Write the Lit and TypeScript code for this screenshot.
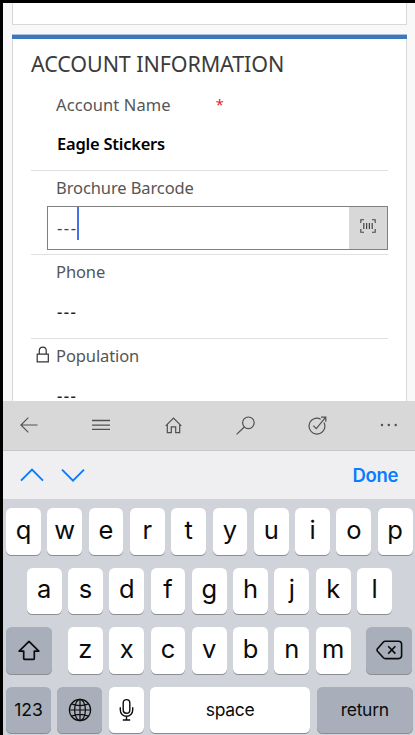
import { LitElement, html, css, svg } from "lit";
import { customElement } from "lit/decorators.js";

const icon = (w: number, h: number, body: unknown, sw = 1.2) => html`<svg
  width=${w} height=${h} viewBox="0 0 ${w} ${h}" fill="none" stroke="currentColor" stroke-width=${sw}>${body}</svg>`;

const icons = {
  lock: icon(14, 18, svg`<path d="M1.2 8.2H12.3V15.8H1.2ZM3.3 8V4.6C3.3 2.3 4.8 1.2 6.7 1.2S10.2 2.3 10.2 4.6V8"/>`),
  scan: icon(16, 14, svg`<path d="M4 .8H.8V4M12 .8H15.2V4M.8 10V13.2H4M15.2 10V13.2H12"/><path d="M3.8 4V10M6.6 4V10M9.4 4V10M12.2 4V10" stroke-width="1.2"/>`, 1.1),
  back: icon(18, 16, svg`<path d="M17.5 8H.8M8.3 .6L.9 8L8.3 15.4"/>`, 1.1),
  menu: icon(18, 12, svg`<path d="M0 1.5H18M0 6.2H18M0 10.4H18"/>`, 1.3),
  home: icon(17, 17, svg`<path d="M.7 8.9L8.5 1L16.3 8.9M2.3 7.6V15.6H6.3V9.9H10.7V15.6H14.7V7.6"/>`),
  search: icon(19, 19, svg`<circle cx="12.4" cy="6.8" r="5.8"/><path d="M8.3 11L.6 18.4"/>`),
  task: icon(19, 19, svg`<path d="M12.7 3.2A7.9 7.9 0 1 0 16 6.6M5.3 9.6L8.3 12.6L17.3 1.6M13 1.2H17.8V5.8"/>`),
  more: icon(18, 4, svg`<g fill="currentColor" stroke="none"><circle cx="2" cy="2" r="1.2"/><circle cx="8.8" cy="2" r="1.2"/><circle cx="15.7" cy="2" r="1.2"/></g>`),
  up: icon(24, 14, svg`<path d="M1 12.6L12 1.6L23 12.6"/>`, 2),
  down: icon(24, 14, svg`<path d="M1 1.6L12 12.6L23 1.6"/>`, 2),
  shift: icon(22, 21, svg`<path d="M11 1.3L20.8 11.2H16.3V18.6Q16.3 19.3 15.6 19.3H6.4Q5.7 19.3 5.7 18.6V11.2H1.2Z" stroke-linejoin="round"/>`, 1.7),
  erase: icon(27, 20, svg`<path d="M9.3 1.2H22.5Q25.6 1.2 25.6 4.2V15.6Q25.6 18.6 22.5 18.6H9.3Q8.2 18.6 7.4 17.8L1.5 11.2Q.6 9.9 1.5 8.7L7.4 2Q8.2 1.2 9.3 1.2Z"/><path d="M12.2 6.2L19.4 13.6M19.4 6.2L12.2 13.6"/>`, 1.6),
  globe: icon(24, 24, svg`<circle cx="12" cy="12" r="10.6"/><ellipse cx="12" cy="12" rx="5.4" ry="10.6"/><path d="M12 1.4V22.6M1.4 12H22.6M3.6 5.9Q12 9.2 20.4 5.9M3.6 18.1Q12 14.8 20.4 18.1"/>`, 1.2),
  mic: icon(15, 24, svg`<rect x="4.2" y="1.6" width="6.6" height="13.6" rx="3.3"/><path d="M1.3 9.3V12A6.2 6.2 0 0 0 13.7 12V9.3M7.5 18.2V21.8M3.8 22H11.2"/>`, 1.4),
};

@customElement("app-root")
export class AppRoot extends LitElement {
  static styles = css`
    :host {
      display: flex;
      flex-direction: column;
      box-sizing: border-box;
      width: 415px;
      height: 735px;
      overflow: hidden;
      border: solid #000;
      border-width: 3px 0 0 3px;
      background: #f8f8f8;
      font-family: "Noto Sans", "Open Sans", sans-serif;
    }
    svg { display: block; flex: none; }
    .page { height: 398px; overflow: hidden; padding: 0 8px 0 9px; flex: none; }
    .previous {
      height: 21px;
      border: 1px solid #d8d8d8;
      border-bottom-width: 1.5px;
      border-top: 0;
      background: #fff;
      margin-bottom: 9px;
    }
    .card {
      height: 400px;
      border: 1px solid #d8d8d8;
      border-top: 0;
      background: #fff;
    }
    .accent { height: 4px; margin: 0 -1px; background: #3c78b8; border-top: 1px solid #a5c2df; }
    .body { padding: 0 18px; }
    h2 {
      margin: 0;
      height: 50px;
      line-height: 50px;
      font-size: 21.5px;
      font-weight: 400;
      color: #3b3b3b;
      white-space: nowrap;
    }
    .title { letter-spacing: -0.1px; }
    .field {
      box-sizing: border-box;
      height: 84px;
      border-bottom: 1.5px solid #e0e0e0;
    }
    .first { height: 82px; }
    .label {
      display: flex;
      align-items: center;
      box-sizing: border-box;
      height: 35px;
      padding: 0 0 2px 25px;
      font-size: 16.5px;
      letter-spacing: -0.1px;
      color: #555;
      white-space: nowrap;
    }
    .first .label { height: 32px; letter-spacing: 0.1px; }
    .locked { padding-left: 5px; }
    .locked svg { margin-right: 6px; color: #333; position: relative; top: -1px; }
    .required { margin-left: 45px; color: #f01818; font-size: 14.5px; }
    .value {
      padding-left: 26px;
      height: 44px;
      line-height: 44px;
      font-size: 16.5px;
      color: #222;
    }
    .dashes { font-weight: 500; letter-spacing: 1.5px; }
    .last { height: 26px; line-height: 26px; padding-top: 9px; }
    .strong { font-weight: 600; color: #000; letter-spacing: -0.23px; line-height: 45px; }
    .input {
      display: flex;
      box-sizing: border-box;
      height: 44px;
      margin-left: 16px;
      border: 1.5px solid #808080;
      background: #fff;
    }
    .text { flex: 1; display: flex; padding-left: 9px; line-height: 41px; font-size: 16.5px; color: #444; letter-spacing: 1.5px; }
    .caret { width: 2.4px; height: 33px; background: #4a6ee8; margin-left: -0.6px; }
    .scan { width: 38.5px; background: #d8d8d8; color: #444; display: flex; justify-content: center; padding-top: 12px; box-sizing: border-box; }
    .nav {
      height: 50px;
      box-sizing: border-box;
      flex: none;
      display: grid;
      grid-template-columns: repeat(6, 72px);
      background: #d8d8d8;
      border-bottom: 1px solid #c6c6c6;
      color: #505050;
      margin-left: -10px;
      padding-bottom: 1px;
    }
    .nav span { display: grid; place-items: center; }
    .assist {
      height: 48px;
      flex: none;
      box-sizing: border-box;
      display: flex;
      align-items: center;
      padding: 0 17px 0 17px;
      gap: 17px;
      background: #efeff1;
      color: #0a7cff;
    }
    .done { margin-left: auto; font: 600 18.5px Inter, sans-serif; letter-spacing: -0.35px; }
    .keyboard {
      flex: 1;
      background: #d0d3da;
      padding: 9px 2.6px 0 3.2px;
      display: flex;
      flex-direction: column;
      gap: 13px;
      font-family: Inter, sans-serif;
      color: #0b0b0b;
    }
    .row { display: flex; justify-content: center; gap: 6.5px; height: 46.5px; flex: none; }
    .key {
      width: 34.8px;
      height: 46.5px;
      box-sizing: border-box;
      flex: none;
      display: flex;
      align-items: center;
      justify-content: center;
      border-radius: 5.5px;
      background: #fff;
      box-shadow: 0 1px 0 #8b8d92;
      font-size: 25.5px;
      font-weight: 370;
      padding-bottom: 4.5px;
    }
    .row-three, .row-four { justify-content: space-between; }
    .letters { display: flex; gap: 6.5px; }
    .dark { background: #a8afbb; }
    .side { width: 46px; padding-bottom: 0; }
    .small { font-size: 17.5px; font-weight: 400; letter-spacing: -0.3px; padding-bottom: 0; }
    .num { width: 44.6px; letter-spacing: 0; }
    .globe { width: 45px; padding-bottom: 0; }
    .mic { padding-bottom: 0; }
    .space { width: 160px; }
    .return { width: 96.4px; }
  `;

  private keys(letters: string) {
    return [...letters].map((l) => html`<div class="key">${l}</div>`);
  }

  render() {
    return html`
      <div class="page">
        <div class="previous"></div>
        <div class="card">
          <div class="accent"></div>
          <div class="body">
            <h2><span class="title">ACCOUNT INFORMATION</span></h2>
            <div class="field first">
              <div class="label"><span>Account Name</span><span class="required">*</span></div>
              <div class="value strong">Eagle Stickers</div>
            </div>
            <div class="field">
              <div class="label"><span>Brochure Barcode</span></div>
              <div class="input">
                <div class="text">---<span class="caret"></span></div>
                <div class="scan">${icons.scan}</div>
              </div>
            </div>
            <div class="field">
              <div class="label"><span>Phone</span></div>
              <div class="value dashes">---</div>
            </div>
            <div class="field">
              <div class="label locked">${icons.lock}<span>Population</span></div>
              <div class="value dashes last">---</div>
            </div>
          </div>
        </div>
      </div>
      <div class="nav">
        ${[icons.back, icons.menu, icons.home, icons.search, icons.task, icons.more].map((i) => html`<span>${i}</span>`)}
      </div>
      <div class="assist">${icons.up}${icons.down}<span class="done">Done</span></div>
      <div class="keyboard">
        <div class="row">${this.keys("qwertyuiop")}</div>
        <div class="row">${this.keys("asdfghjkl")}</div>
        <div class="row row-three">
          <div class="key dark side">${icons.shift}</div>
          <div class="letters">${this.keys("zxcvbnm")}</div>
          <div class="key dark side">${icons.erase}</div>
        </div>
        <div class="row row-four">
          <div class="key dark small num">123</div>
          <div class="key dark globe">${icons.globe}</div>
          <div class="key mic">${icons.mic}</div>
          <div class="key small space">space</div>
          <div class="key dark small return">return</div>
        </div>
      </div>
    `;
  }
}
